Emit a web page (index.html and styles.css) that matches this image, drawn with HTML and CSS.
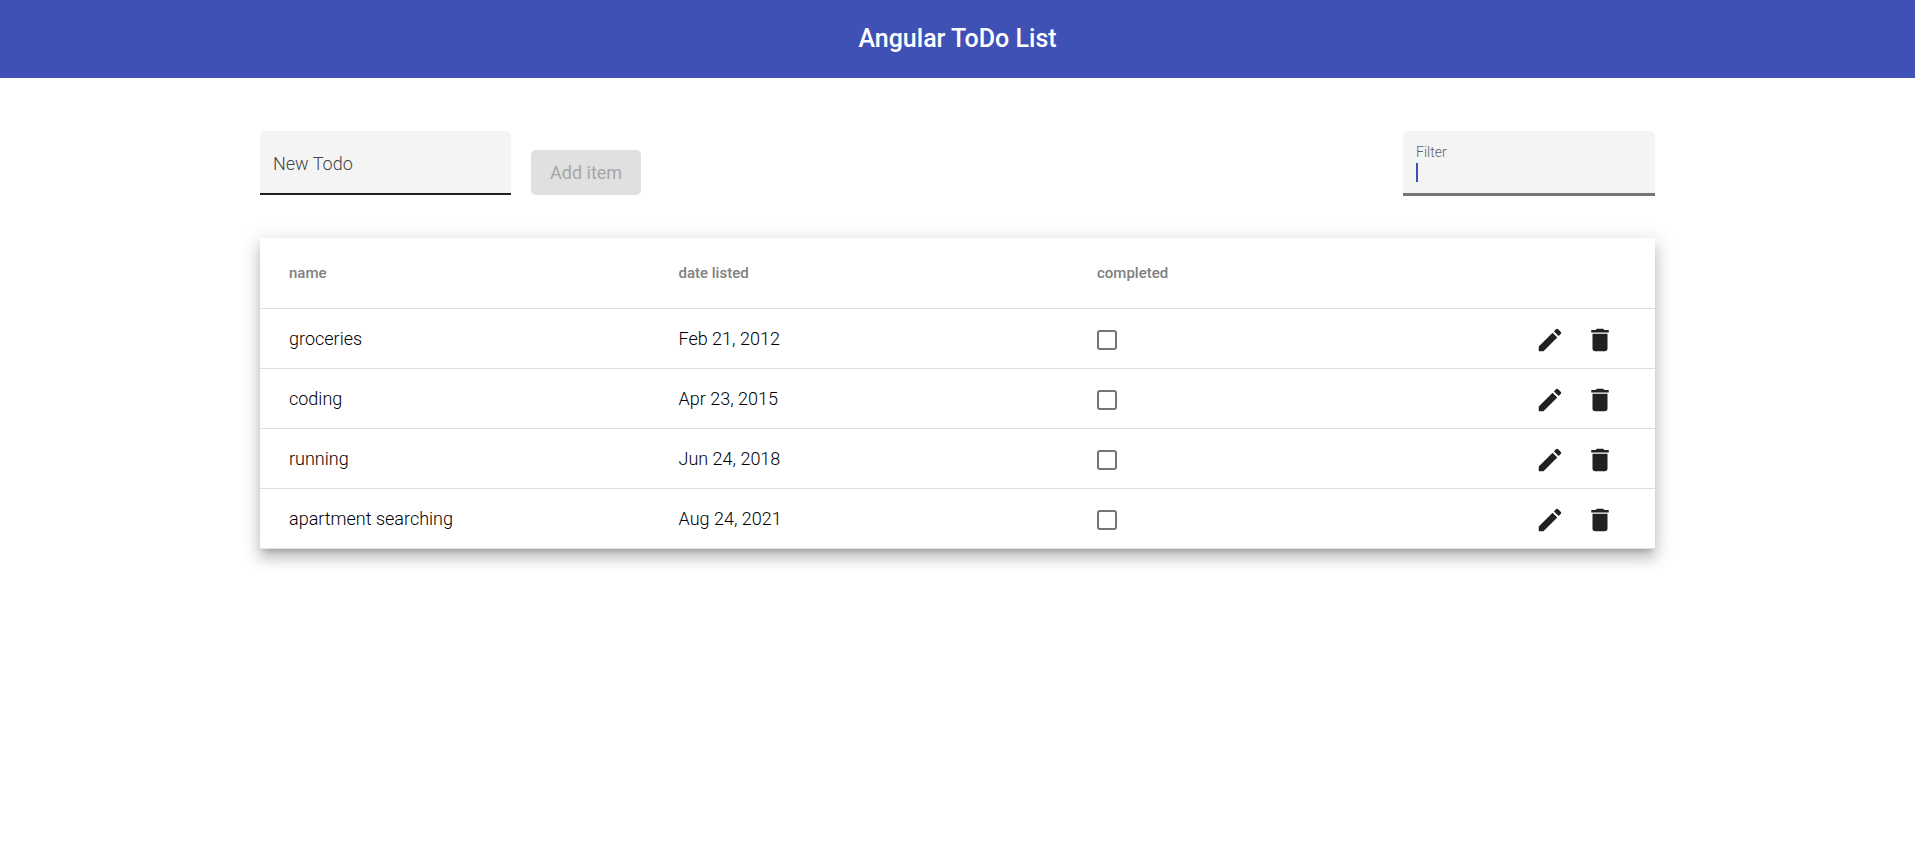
FILE: index.html
```html
<!DOCTYPE html>
<html lang="en">
<head>
<meta charset="utf-8">
<title>Angular ToDo List</title>
<link rel="stylesheet" href="styles.css">
</head>
<body>
<svg width="0" height="0" class="sprite" aria-hidden="true">
  <symbol id="edit" viewBox="0 0 24 24"><path d="M3 17.25V21h3.75L17.81 9.94l-3.75-3.75L3 17.25zM20.71 7.04a1 1 0 0 0 0-1.41l-2.34-2.34a1 1 0 0 0-1.41 0l-1.83 1.83 3.75 3.75 1.83-1.83z"/></symbol>
  <symbol id="delete" viewBox="0 0 24 24"><path d="M6 19c0 1.1.9 2 2 2h8c1.1 0 2-.9 2-2V7H6v12zM19 4h-3.500l-1-1h-5l-1 1H5v2h14V4z"/></symbol>
</svg>
<header class="toolbar"><h1 class="title">Angular ToDo List</h1></header>
<main class="page">
  <div class="controls">
    <form class="add-form">
      <div class="field field-new">
        <input class="field-input" id="new-todo" type="text" placeholder="New Todo" aria-label="New Todo">
      </div>
      <button class="add-button" type="submit" disabled>Add item</button>
    </form>
    <div class="field field-filter">
      <label class="field-label" for="filter">Filter</label>
      <div class="field-line"><span class="caret"></span><input class="field-input" id="filter" type="text"></div>
    </div>
  </div>
  <table class="todos">
    <thead>
      <tr><th class="col-name">name</th><th class="col-date">date listed</th><th class="col-done">completed</th><th class="col-actions"></th></tr>
    </thead>
    <tbody>
      <tr>
        <td>groceries</td><td>Feb 21, 2012</td>
        <td><input class="check" type="checkbox" aria-label="groceries completed"></td>
        <td><div class="actions"><button class="icon-button" aria-label="Edit"><svg class="icon"><use href="#edit"/></svg></button><button class="icon-button" aria-label="Delete"><svg class="icon"><use href="#delete"/></svg></button></div></td>
      </tr>
      <tr>
        <td>coding</td><td>Apr 23, 2015</td>
        <td><input class="check" type="checkbox" aria-label="coding completed"></td>
        <td><div class="actions"><button class="icon-button" aria-label="Edit"><svg class="icon"><use href="#edit"/></svg></button><button class="icon-button" aria-label="Delete"><svg class="icon"><use href="#delete"/></svg></button></div></td>
      </tr>
      <tr>
        <td>running</td><td>Jun 24, 2018</td>
        <td><input class="check" type="checkbox" aria-label="running completed"></td>
        <td><div class="actions"><button class="icon-button" aria-label="Edit"><svg class="icon"><use href="#edit"/></svg></button><button class="icon-button" aria-label="Delete"><svg class="icon"><use href="#delete"/></svg></button></div></td>
      </tr>
      <tr>
        <td>apartment searching</td><td>Aug 24, 2021</td>
        <td><input class="check" type="checkbox" aria-label="apartment searching completed"></td>
        <td><div class="actions"><button class="icon-button" aria-label="Edit"><svg class="icon"><use href="#edit"/></svg></button><button class="icon-button" aria-label="Delete"><svg class="icon"><use href="#delete"/></svg></button></div></td>
      </tr>
    </tbody>
  </table>
</main>
</body>
</html>
```
FILE: styles.css
```css
* { box-sizing: border-box; }
body { margin: 0; background: #fff; color: #212121; font-family: Roboto, sans-serif; }
.sprite { display: block; }
.toolbar { display: flex; align-items: center; justify-content: center; height: 78px; background: #3f51b5; color: #fff; }
.title { margin: 0; font-size: 25px; font-weight: 500; line-height: 40px; }
.page { padding: 53px 260px; }
.controls { display: flex; justify-content: space-between; margin-bottom: 43px; }
.add-form { display: flex; align-items: flex-end; gap: 20px; }
.field { width: 251px; height: 64px; padding: 0 13px; background: #f4f4f4; border-radius: 5px 5px 0 0; }
.field-new { display: flex; padding-top: 3px; border-bottom: 2px solid #212121; }
.field-filter { width: 252px; height: 65px; margin-bottom: -1px; padding-top: 12px; border-bottom: 3px solid #737378; }
.field-label { display: block; font-size: 14px; line-height: 18px; font-weight: 300; color: #60606a; }
.field-line { display: flex; align-items: center; margin-top: 1px; }
.caret { width: 2px; height: 19px; background: #3f51b5; }
.field-input { flex: 1; min-width: 0; padding: 0; border: 0; outline: 0; background: transparent; font: 18px/20px Roboto, sans-serif; color: #212121; caret-color: #3f51b5; }
.field-input::placeholder { color: #444; font-weight: 300; opacity: 1; }
.add-button { height: 45px; padding: 0 19px; border: 0; border-radius: 5px; background: #e0e0e0; color: #a6a6a6; font: 400 18px/45px Roboto, sans-serif; }
.todos { width: 100%; table-layout: fixed; border-collapse: separate; border-spacing: 0; background: #fff; box-shadow: 0 6px 6px -4px rgba(0, 0, 0, .2), 0 10px 12px 1px rgba(0, 0, 0, .14), 0 4px 18px 3px rgba(0, 0, 0, .12); }
.todos th { height: 71px; padding: 0; border-bottom: 1px solid #e0e0e0; text-align: left; font-size: 15px; font-weight: 500; color: #808080; }
.todos td { height: 60px; padding: 0; border-bottom: 1px solid #e0e0e0; font-size: 18px; line-height: 24px; font-weight: 300; color: #000; }
.todos th:first-child, .todos td:first-child { padding-left: 29px; }
.col-name, .col-date, .col-done { width: 30%; }
.check { display: block; appearance: none; width: 20px; height: 20px; margin: 2px 0 0; border: 2px solid #757575; border-radius: 3px; }
.actions { display: flex; justify-content: flex-end; gap: 20px; padding-right: 40px; }
.icon-button { padding: 2px 0 0; border: 0; background: transparent; color: #212121; }
.icon { display: block; width: 30px; height: 30px; fill: currentColor; }
```
